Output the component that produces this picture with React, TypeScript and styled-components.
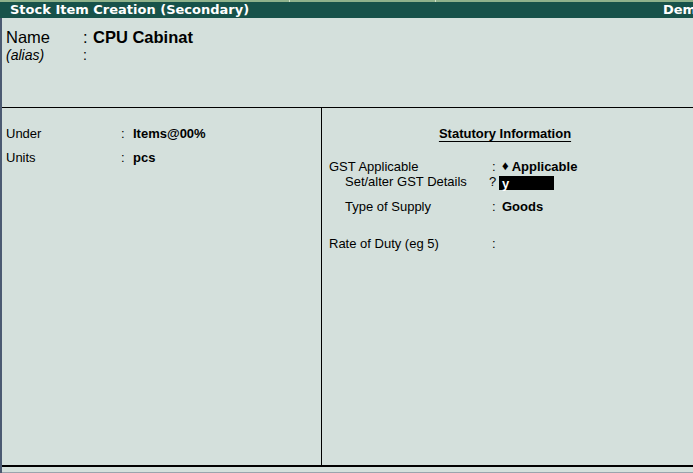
import React from "react";
import styled, { createGlobalStyle } from "styled-components";

const Global = createGlobalStyle`
  html, body { margin: 0; padding: 0; background: #d4e0dc; }
  body { font-family: "Liberation Sans", Arial, sans-serif; color: #000; }
`;

const Screen = styled.div`
  width: 693px;
  height: 473px;
  display: flex;
  flex-direction: column;
  overflow: hidden;
  background: #d4e0dc;
`;

const TopStrip = styled.div`
  height: 2px;
  background: #8fb28c;
  display: grid;
  grid-template-columns: 290px 146px 1fr;
`;

const StripCell = styled.div`
  border-right: 1px solid #cfe0c8;
`;

const TitleBar = styled.div`
  height: 16px;
  background: #17524a;
  color: #fff;
  display: grid;
  grid-template-columns: 663px 1fr;
  font-family: "DejaVu Sans", Verdana, sans-serif;
  font-weight: bold;
  font-size: 13px;
  line-height: 16px;
  overflow: hidden;
`;

const TitleText = styled.div`
  padding-left: 10px;
  white-space: nowrap;
`;

const Company = styled.div`
  white-space: nowrap;
  overflow: hidden;
`;

const Body = styled.div`
  flex: 1;
  display: flex;
  flex-direction: column;
  border-left: 2px solid #4b5a72;
`;

const Header = styled.div`
  height: 90px;
  padding: 10px 0 0 4px;
  box-sizing: border-box;
  border-bottom: 1px solid #000;
`;

const NameRow = styled.div`
  display: grid;
  grid-template-columns: 77px 10px 1fr;
  font-size: 16.5px;
  line-height: 18px;
`;

const AliasRow = styled.div`
  display: grid;
  grid-template-columns: 77px 10px 1fr;
  font-size: 14px;
  font-style: italic;
  line-height: 16px;
  margin-top: 1px;
`;

const Colon = styled.span`
  font-style: normal;
`;

const BoldValue = styled.span<{ $size?: number }>`
  font-weight: bold;
  font-size: ${(p) => p.$size ?? 13}px;
`;

const Panels = styled.div`
  flex: 1;
  display: grid;
  grid-template-columns: 320px 1fr;
  border-bottom: 2px solid #000;
`;

const LeftPanel = styled.div`
  border-right: 1px solid #000;
  padding: 19px 0 0 4px;
  display: flex;
  flex-direction: column;
  gap: 10px;
`;

const Row = styled.div<{ $label: number; $colon?: number; $indent?: number; $top?: number }>`
  display: grid;
  grid-template-columns: ${(p) => p.$label - (p.$indent ?? 0)}px ${(p) => p.$colon ?? 10}px 1fr;
  padding-left: ${(p) => p.$indent ?? 0}px;
  margin-top: ${(p) => p.$top ?? 0}px;
  font-size: 13px;
  line-height: 14px;
  align-items: center;
  white-space: nowrap;
`;

const RightPanel = styled.div`
  padding: 18px 0 0 7px;
  display: flex;
  flex-direction: column;
`;

const SectionTitle = styled.div`
  text-align: center;
  font-weight: bold;
  font-size: 13px;
  line-height: 15px;
  text-decoration: underline;
  text-underline-offset: 3px;
  margin: 0 12px 18px 0;
`;

const Question = styled.span`
  margin-left: -3px;
`;

const InputBox = styled.span`
  display: inline-block;
  width: 55px;
  height: 14px;
  margin-left: -3px;
  background: #000;
  color: #fff;
  font-weight: bold;
  font-size: 13px;
  line-height: 15px;
  padding-left: 3px;
  box-sizing: border-box;
  vertical-align: middle;
`;

const Diamond = styled.span`
  font-size: 13px;
  margin-right: 3px;
  vertical-align: 1px;
`;

const Footer = styled.div`
  height: 5px;
  border-bottom: 1px solid #9aa4ad;
`;

export default function App() {
  return (
    <Screen>
      <Global />
      <TopStrip>
        <StripCell />
        <StripCell />
        <div />
      </TopStrip>
      <TitleBar>
        <TitleText>Stock Item Creation (Secondary)</TitleText>
        <Company>Demo Company</Company>
      </TitleBar>
      <Body>
        <Header>
          <NameRow>
            <span>Name</span>
            <Colon>:</Colon>
            <BoldValue $size={16.5}>CPU Cabinat</BoldValue>
          </NameRow>
          <AliasRow>
            <span>(alias)</span>
            <Colon>:</Colon>
            <span />
          </AliasRow>
        </Header>
        <Panels>
          <LeftPanel>
            <Row $label={115} $colon={12}>
              <span>Under</span>
              <span>:</span>
              <BoldValue>Items@00%</BoldValue>
            </Row>
            <Row $label={115} $colon={12}>
              <span>Units</span>
              <span>:</span>
              <BoldValue>pcs</BoldValue>
            </Row>
          </LeftPanel>
          <RightPanel>
            <SectionTitle>Statutory Information</SectionTitle>
            <Row $label={163}>
              <span>GST Applicable</span>
              <span>:</span>
              <BoldValue>
                <Diamond>♦</Diamond>Applicable
              </BoldValue>
            </Row>
            <Row $label={163} $indent={16} $top={1}>
              <span>Set/alter GST Details</span>
              <Question>?</Question>
              <span>
                <InputBox>y</InputBox>
              </span>
            </Row>
            <Row $label={163} $indent={16} $top={10}>
              <span>Type of Supply</span>
              <span>:</span>
              <BoldValue>Goods</BoldValue>
            </Row>
            <Row $label={163} $top={23}>
              <span>Rate of Duty (eg 5)</span>
              <span>:</span>
              <span />
            </Row>
          </RightPanel>
        </Panels>
        <Footer />
      </Body>
    </Screen>
  );
}
